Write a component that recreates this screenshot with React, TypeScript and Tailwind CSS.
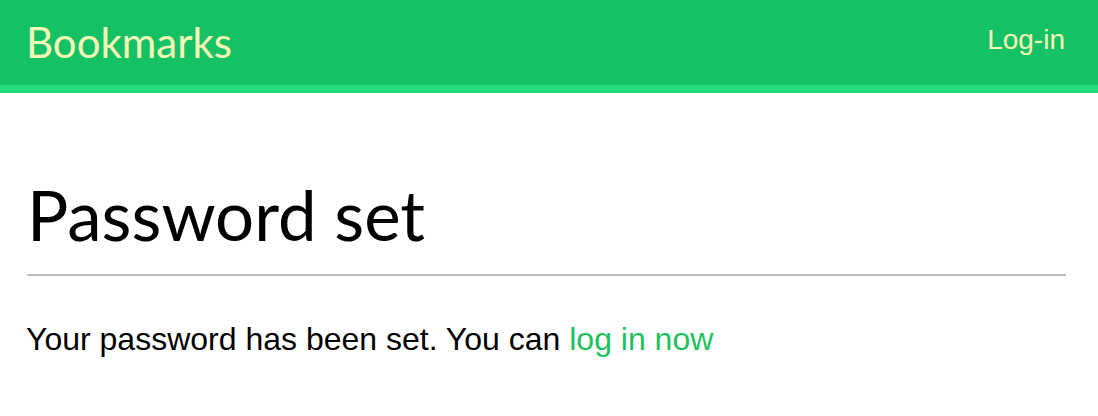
export default function App() {
  return (
    <div className="min-h-screen bg-white">
      <header className="flex h-[93px] items-center justify-between border-b-[8px] border-[#22dc7c] bg-[#14c165] pl-[26px] pr-[33px]">
        <span className="mb-[2px] text-[42px] leading-none text-[#f4f9b6] [font-family:'Lato','Noto_Sans',sans-serif]">
          Bookmarks
        </span>
        <a href="#" className="mb-[5px] text-[28px] leading-none text-[#f4f9b6] [font-family:'Liberation_Sans',Arial,sans-serif]">
          Log-in
        </a>
      </header>
      <main className="pl-[27px] pr-[32px]">
        <h1 className="mt-[82px] border-b-2 border-[#bdbdbd] pb-[19px] text-[69px] leading-[80px] text-black [font-family:'Lato','Noto_Sans',sans-serif]">
          Password set
        </h1>
        <p className="-ml-[1px] mt-[47px] text-[32px] leading-none text-black [font-family:'Liberation_Sans',Arial,sans-serif]">
          Your password has been set. You can{" "}
          <a href="#" className="text-[#1ec160]">
            log in now
          </a>
        </p>
      </main>
    </div>
  );
}
